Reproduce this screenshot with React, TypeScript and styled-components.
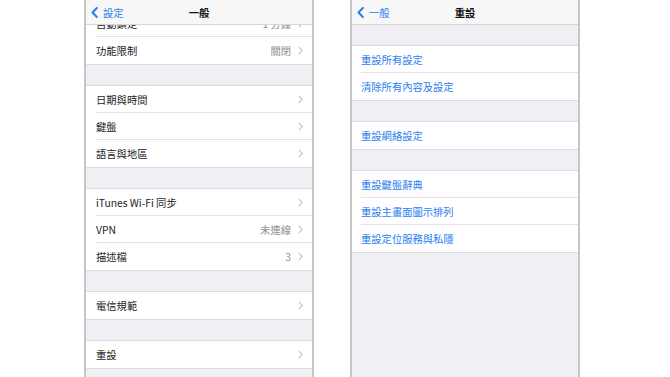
import React from 'react';
import styled, { createGlobalStyle } from 'styled-components';

const blue = '#2a7ef0';

const GlobalStyle = createGlobalStyle`
  html, body {
    margin: 0;
    padding: 0;
    background: #ffffff;
  }
  body {
    font-family: "Noto Sans CJK TC", "Noto Sans", sans-serif;
  }
`;

export const Page = styled('div')`
  display: flex;
  gap: 36px;
  height: 377px;
  overflow: hidden;
  padding-left: 84px;
  width: 670px;
  box-sizing: border-box;
`;

export const Phone = styled('div')`
  background: #efeff4;
  border-left: 2px solid #c6c6c6;
  border-right: 2px solid #c6c6c6;
  box-sizing: border-box;
  height: 377px;
  overflow: hidden;
  position: relative;
  width: 230px;
`;

export const NavBar = styled('div')`
  align-items: center;
  background: #f7f7f7;
  border-bottom: 1px solid #d6d6da;
  box-sizing: border-box;
  display: grid;
  grid-template-columns: 1fr auto 1fr;
  height: 25px;
  left: 0;
  position: absolute;
  right: 0;
  top: 0;
  z-index: 2;
`;

export const Back = styled('div')`
  align-items: center;
  color: ${blue};
  display: flex;
  font-size: 10.3px;
  gap: 5px;
  padding-left: 5px;
`;

export const Title = styled('div')`
  color: #111;
  font-size: 10.3px;
  font-weight: 600;
`;

export const List = styled('div')<{ top: number }>`
  display: flex;
  flex-direction: column;
  gap: 20px;
  padding-top: ${props => props.top}px;
`;

export const Group = styled('div')<{ open?: boolean }>`
  background: #ffffff;
  border-bottom: 1px solid #dcdce0;
  border-top: ${props => (props.open ? 'none' : '1px solid #dcdce0')};
  display: flex;
  flex-direction: column;
`;

export const Row = styled('div')<{ inset: number }>`
  align-items: center;
  display: flex;
  height: 27px;
  padding-left: ${props => props.inset}px;
  position: relative;

  & + &::before {
    border-top: 1px solid #e3e3e7;
    content: '';
    left: ${props => props.inset}px;
    position: absolute;
    right: 0;
    top: -1px;
  }
`;

export const Label = styled('span')<{ action?: boolean }>`
  color: ${props => (props.action ? blue : '#1c1c1e')};
  flex: 1;
  font-size: 10.3px;
`;

export const Value = styled('span')`
  color: #8e8e93;
  font-size: 10.3px;
  margin-right: 7px;
`;

export const Chevron = styled('svg')`
  flex: none;
  margin-right: 9px;
`;

const Arrow = () => (
  <Chevron width="5" height="9" viewBox="0 0 5 9">
    <polyline points="0.7,0.8 4.2,4.5 0.7,8.2" fill="none" stroke="#c4c4c9" strokeWidth="1.1" />
  </Chevron>
);

const BackArrow = () => (
  <svg width="7" height="11" viewBox="0 0 7 11">
    <polyline points="5.8,1 1.5,5.5 5.8,10" fill="none" stroke={blue} strokeWidth="2" strokeLinecap="round" strokeLinejoin="round" />
  </svg>
);

type Item = { label: string; value?: string };

const general: Item[][] = [
  [{ label: '自動鎖定', value: '1 分鐘' }, { label: '功能限制', value: '關閉' }],
  [{ label: '日期與時間' }, { label: '鍵盤' }, { label: '語言與地區' }],
  [{ label: 'iTunes Wi-Fi 同步' }, { label: 'VPN', value: '未連線' }, { label: '描述檔', value: '3' }],
  [{ label: '電信規範' }],
  [{ label: '重設' }],
];

const reset: string[][] = [
  ['重設所有設定', '清除所有內容及設定'],
  ['重設網絡設定'],
  ['重設鍵盤辭典', '重設主畫面圖示排列', '重設定位服務與私隱'],
];

export default function App() {
  return (
    <Page>
      <GlobalStyle />
      <Phone>
        <NavBar>
          <Back>
            <BackArrow />
            設定
          </Back>
          <Title>一般</Title>
          <span />
        </NavBar>
        <List top={10}>
          {general.map((group, i) => (
            <Group key={i} open={i === 0}>
              {group.map(item => (
                <Row inset={10} key={item.label}>
                  <Label>{item.label}</Label>
                  {item.value && <Value>{item.value}</Value>}
                  <Arrow />
                </Row>
              ))}
            </Group>
          ))}
        </List>
      </Phone>
      <Phone>
        <NavBar>
          <Back>
            <BackArrow />
            一般
          </Back>
          <Title>重設</Title>
          <span />
        </NavBar>
        <List top={45}>
          {reset.map((group, i) => (
            <Group key={i}>
              {group.map(label => (
                <Row inset={9} key={label}>
                  <Label action>{label}</Label>
                </Row>
              ))}
            </Group>
          ))}
        </List>
      </Phone>
    </Page>
  );
}
